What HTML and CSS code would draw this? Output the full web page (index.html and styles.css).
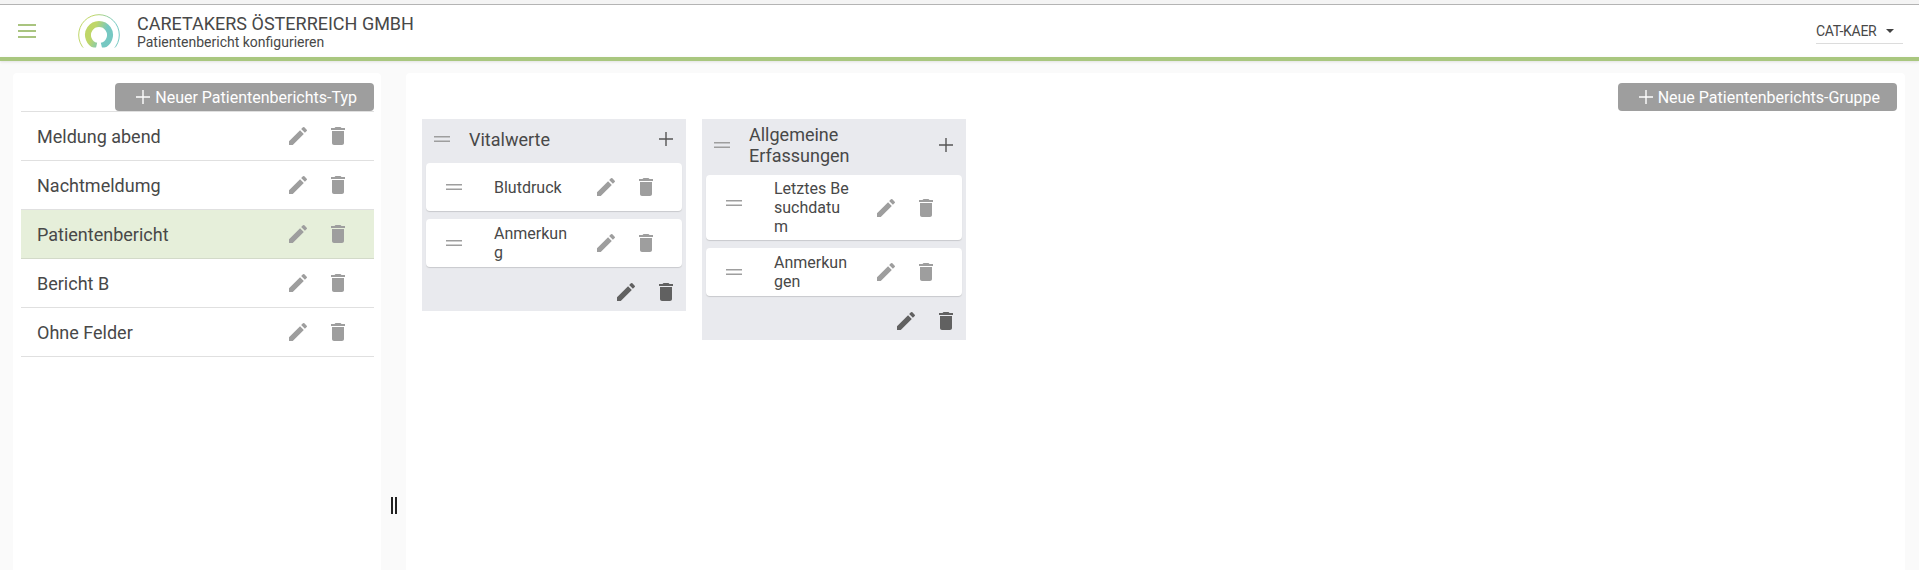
FILE: index.html
```html
<!DOCTYPE html>
<html lang="de">
<head>
<meta charset="utf-8">
<title>Patientenbericht konfigurieren</title>
<link rel="stylesheet" href="styles.css">
</head>
<body>
<svg class="defs" width="0" height="0" aria-hidden="true">
  <symbol id="i-pencil" viewBox="0 0 24 24"><path d="M3 17.25V21h3.75L17.81 9.94l-3.75-3.75L3 17.25zM20.71 7.04a1 1 0 0 0 0-1.41l-2.34-2.34a1 1 0 0 0-1.41 0l-1.83 1.83 3.75 3.75 1.83-1.83z"/></symbol>
  <symbol id="i-trash" viewBox="0 0 24 24"><path d="M6 19c0 1.1.9 2 2 2h8c1.100 0 2-.9 2-2V7H6v12zM19 4h-3.500l-1-1h-5l-1 1H5v2h14V4z"/></symbol>
  <symbol id="i-grip" viewBox="0 0 24 24"><path d="M20 9H4v1.500h16V9zM4 15h16v-1.500H4V15z"/></symbol>
  <symbol id="i-plus" viewBox="0 0 24 24"><path d="M19 12.700h-6.300V19h-1.400v-6.300H5v-1.400h6.300V5h1.400v6.300H19z"/></symbol>
</svg>

<div class="top-strip"></div>
<header class="app-bar">
  <button class="menu-btn" aria-label="Menü"><span></span><span></span><span></span></button>
  <svg class="logo" viewBox="0 0 44 44" width="44" height="44" aria-hidden="true">
    <defs>
      <clipPath id="logo-clip"><rect width="44" height="34.500"/></clipPath>
      <linearGradient id="logo-grad" x1="0" y1="0.200" x2="1" y2="0.600">
        <stop offset="0.250" stop-color="#bfd668"/>
        <stop offset="0.750" stop-color="#76c8c2"/>
      </linearGradient>
    </defs>
    <g clip-path="url(#logo-clip)" fill="none" stroke="url(#logo-grad)">
      <circle cx="22" cy="22" r="20.300" stroke-width="1"/>
      <path d="M19.500 32.700A11 11 0 1 1 24.500 32.700" stroke-width="6"/>
    </g>
  </svg>
  <div class="titles">
    <div class="company">CARETAKERS ÖSTERREICH GMBH</div>
    <div class="subtitle">Patientenbericht konfigurieren</div>
  </div>
  <div class="tenant">
    <span>CAT-KAER</span>
    <i class="caret"></i>
  </div>
</header>
<div class="green-line"></div>

<main class="workspace">
  <aside class="panel side">
    <div class="side-toolbar">
      <button class="add-btn"><svg class="ico-plus"><use href="#i-plus"/></svg>Neuer Patientenberichts-Typ</button>
    </div>
    <ul class="type-list">
      <li class="type-row"><span class="type-name">Meldung abend</span><button class="ico-btn" aria-label="Bearbeiten"><svg><use href="#i-pencil"/></svg></button><button class="ico-btn" aria-label="Löschen"><svg><use href="#i-trash"/></svg></button></li>
      <li class="type-row"><span class="type-name">Nachtmeldumg</span><button class="ico-btn" aria-label="Bearbeiten"><svg><use href="#i-pencil"/></svg></button><button class="ico-btn" aria-label="Löschen"><svg><use href="#i-trash"/></svg></button></li>
      <li class="type-row selected"><span class="type-name">Patientenbericht</span><button class="ico-btn" aria-label="Bearbeiten"><svg><use href="#i-pencil"/></svg></button><button class="ico-btn" aria-label="Löschen"><svg><use href="#i-trash"/></svg></button></li>
      <li class="type-row"><span class="type-name">Bericht B</span><button class="ico-btn" aria-label="Bearbeiten"><svg><use href="#i-pencil"/></svg></button><button class="ico-btn" aria-label="Löschen"><svg><use href="#i-trash"/></svg></button></li>
      <li class="type-row"><span class="type-name">Ohne Felder</span><button class="ico-btn" aria-label="Bearbeiten"><svg><use href="#i-pencil"/></svg></button><button class="ico-btn" aria-label="Löschen"><svg><use href="#i-trash"/></svg></button></li>
    </ul>
  </aside>

  <div class="gutter"><div class="gutter-handle"><span></span><span></span></div></div>

  <section class="panel board-panel">
    <div class="board-toolbar">
      <button class="add-btn"><svg class="ico-plus"><use href="#i-plus"/></svg>Neue Patientenberichts-Gruppe</button>
    </div>
    <div class="board">
      <div class="group">
        <div class="group-head">
          <svg class="grip head-grip"><use href="#i-grip"/></svg>
          <div class="group-title">Vitalwerte</div>
          <svg class="head-plus"><use href="#i-plus"/></svg>
        </div>
        <div class="field-card">
          <svg class="grip"><use href="#i-grip"/></svg>
          <div class="field-name">Blutdruck</div>
          <button class="ico-btn" aria-label="Bearbeiten"><svg><use href="#i-pencil"/></svg></button>
          <button class="ico-btn" aria-label="Löschen"><svg><use href="#i-trash"/></svg></button>
        </div>
        <div class="field-card">
          <svg class="grip"><use href="#i-grip"/></svg>
          <div class="field-name">Anmerkung</div>
          <button class="ico-btn" aria-label="Bearbeiten"><svg><use href="#i-pencil"/></svg></button>
          <button class="ico-btn" aria-label="Löschen"><svg><use href="#i-trash"/></svg></button>
        </div>
        <div class="group-foot">
          <button class="ico-btn dark" aria-label="Bearbeiten"><svg><use href="#i-pencil"/></svg></button>
          <button class="ico-btn dark" aria-label="Löschen"><svg><use href="#i-trash"/></svg></button>
        </div>
      </div>

      <div class="group">
        <div class="group-head">
          <svg class="grip head-grip"><use href="#i-grip"/></svg>
          <div class="group-title">Allgemeine Erfassungen</div>
          <svg class="head-plus"><use href="#i-plus"/></svg>
        </div>
        <div class="field-card">
          <svg class="grip grip-raised"><use href="#i-grip"/></svg>
          <div class="field-name">Letztes Besuchdatum</div>
          <button class="ico-btn" aria-label="Bearbeiten"><svg><use href="#i-pencil"/></svg></button>
          <button class="ico-btn" aria-label="Löschen"><svg><use href="#i-trash"/></svg></button>
        </div>
        <div class="field-card">
          <svg class="grip"><use href="#i-grip"/></svg>
          <div class="field-name">Anmerkungen</div>
          <button class="ico-btn" aria-label="Bearbeiten"><svg><use href="#i-pencil"/></svg></button>
          <button class="ico-btn" aria-label="Löschen"><svg><use href="#i-trash"/></svg></button>
        </div>
        <div class="group-foot">
          <button class="ico-btn dark" aria-label="Bearbeiten"><svg><use href="#i-pencil"/></svg></button>
          <button class="ico-btn dark" aria-label="Löschen"><svg><use href="#i-trash"/></svg></button>
        </div>
      </div>
    </div>
  </section>
</main>
</body>
</html>
```

FILE: styles.css
```css
* { box-sizing: border-box; }
html, body { margin: 0; height: 100%; }
body {
  display: flex;
  flex-direction: column;
  height: 570px;
  overflow: hidden;
  background: #fafafa;
  color: #484848;
  font-family: Roboto, "Liberation Sans", sans-serif;
}
.defs { position: absolute; }
button { font-family: inherit; border: 0; padding: 0; background: none; }
svg { display: block; }

.top-strip { height: 5px; flex: none; background: #f4f4f4; border-bottom: 1px solid #b4b4b4; }
.app-bar {
  height: 52px;
  flex: none;
  display: flex;
  align-items: center;
  background: #fff;
}
.menu-btn {
  width: 18px;
  margin-left: 18px;
  display: flex;
  flex-direction: column;
  gap: 4.500px;
}
.menu-btn span { height: 1.500px; background: #a9c47f; display: block; }
.logo { margin-left: 41px; margin-top: 8px; flex: none; }
.titles { margin-left: 16px; margin-top: 2px; }
.company { font-size: 18px; line-height: 20px; }
.subtitle { font-size: 14px; line-height: 16px; }
.tenant {
  margin-left: auto;
  margin-right: 16px;
  margin-top: 1px;
  width: 87px;
  height: 25px;
  display: flex;
  align-items: center;
  font-size: 14px;
  border-bottom: 1px solid #dcdcdc;
}
.tenant span { letter-spacing: -0.25px; }
.caret {
  margin-left: 9px;
  border-left: 4.500px solid transparent;
  border-right: 4.500px solid transparent;
  border-top: 4.500px solid #424242;
}
.green-line { height: 4px; flex: none; background: #a9c77f; box-shadow: 0 1px 3px rgba(0,0,0,.1); }

.workspace {
  flex: 1;
  display: flex;
  min-height: 0;
  padding: 12px 14px 0 13px;
}
.panel { background: #fff; border-radius: 4px 4px 0 0; }
.side { width: 368px; flex: none; padding: 10px 7px 0 8px; }
.gutter { width: 25px; flex: none; display: flex; justify-content: center; align-items: flex-start; padding-top: 424px; }
.gutter-handle { display: flex; gap: 2px; margin-left: 1px; }
.gutter-handle span { width: 2px; height: 17px; background: #222; display: block; }
.board-panel { flex: 1; padding: 10px 8px 0 16px; }

.add-btn {
  height: 28px;
  display: flex;
  align-items: center;
  padding: 0 17px 0 16px;
  background: #9e9e9e;
  border-radius: 4px;
  color: #fff;
  font-size: 16px;
  font-weight: 400;
  white-space: nowrap;
}
.ico-plus { width: 24px; height: 24px; fill: #fff; flex: none; }
.side-toolbar {
  display: flex;
  justify-content: flex-end;
  border-bottom: 1px solid #e0e0e0;
}
.type-list { list-style: none; margin: 0; padding: 0; }
.type-row {
  height: 49px;
  display: flex;
  align-items: center;
  padding: 0 16px;
  border-bottom: 1px solid #e0e0e0;
}
.type-row.selected { background: #e6efda; border-bottom-color: #d3dac9; }
.type-name { flex: 1; font-size: 18px; }
.ico-btn {
  width: 40px;
  height: 40px;
  flex: none;
  display: flex;
  align-items: center;
  justify-content: center;
  fill: #9e9e9e;
}
.ico-btn svg { width: 24px; height: 24px; }
.ico-btn.dark { fill: #616161; }

.board-toolbar { display: flex; justify-content: flex-end; }
.board { display: flex; align-items: flex-start; gap: 16px; margin-top: 8px; }
.group { width: 264px; flex: none; background: #e9eaee; display: flex; flex-direction: column; }
.group-head {
  min-height: 44px;
  display: flex;
  align-items: center;
  padding: 5px 8px 9px 8px;
}
.grip { width: 24px; height: 24px; fill: #9e9e9e; flex: none; margin-right: 28px; }
.head-grip { margin-right: 15px; }
.group-title { flex: 1; font-size: 18px; line-height: 21px; }
.head-plus { width: 24px; height: 24px; flex: none; fill: #555; margin-left: 24px; }
.field-card {
  min-height: 48px;
  margin: 0 4px 8px;
  padding: 4px 16px;
  display: flex;
  align-items: center;
  background: #fff;
  border-radius: 4px;
  box-shadow: 0 1px 1px rgba(0,0,0,.14);
}
.grip-raised { margin-bottom: 9px; }
.field-name {
  width: 92px;
  flex: none;
  padding-right: 16px;
  font-size: 16px;
  line-height: 19px;
  word-break: break-all;
}
.group-foot {
  height: 44px;
  margin-top: -8px;
  padding-top: 5px;
  display: flex;
  justify-content: flex-end;
  align-items: center;
}
```
